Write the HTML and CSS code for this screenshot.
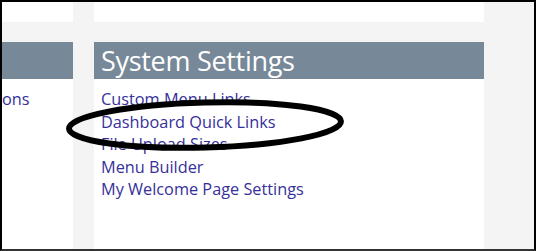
FILE: index.html
```html
<!DOCTYPE html>
<html>
<head>
<meta charset="utf-8">
<link rel="stylesheet" href="styles.css">
</head>
<body>
<div class="frame">
  <div class="col col-left">
    <div class="prev"></div>
    <div class="panel">
      <div class="panel-head"></div>
      <div class="panel-body clipped">
        <a class="link" href="#">ons</a>
      </div>
    </div>
  </div>
  <div class="col col-main">
    <div class="prev"></div>
    <div class="panel">
      <div class="panel-head"><h2 class="title">System Settings</h2></div>
      <div class="panel-body">
        <a class="link" href="#">Custom Menu Links</a>
        <a class="link" href="#">Dashboard Quick Links</a>
        <a class="link" href="#">File Upload Sizes</a>
        <a class="link" href="#">Menu Builder</a>
        <a class="link" href="#">My Welcome Page Settings</a>
      </div>
    </div>
  </div>
  <svg class="circle" width="536" height="251" viewBox="0 0 536 251">
    <ellipse cx="205" cy="125" rx="136" ry="22.5" transform="rotate(-1.5 205 125)" fill="none" stroke="#000" stroke-width="6"/>
  </svg>
</div>
</body>
</html>
```
FILE: styles.css
```css
html, body {
  margin: 0;
  padding: 0;
  background: #ffffff;
}
.frame {
  position: relative;
  box-sizing: border-box;
  width: 536px;
  height: 251px;
  border: 2px solid #000;
  border-bottom-color: #333;
  background: #f4f4f4;
  display: flex;
  gap: 21px;
  overflow: hidden;
  font-family: "Open Sans", "Noto Sans", sans-serif;
}
.col {
  display: flex;
  flex-direction: column;
  gap: 20px;
}
.col-left { width: 71px; }
.col-main { width: 390px; }
.prev {
  height: 20px;
  background: #fff;
}
.panel {
  flex: 1;
  background: #fff;
  display: flex;
  flex-direction: column;
}
.panel-head {
  height: 37px;
  background: #778899;
  padding-left: 7px;
  box-sizing: border-box;
}
.title {
  margin: 0;
  color: #fff;
  font-weight: 400;
  font-size: 27px;
  line-height: 37px;
  letter-spacing: -0.3px;
}
.panel-body {
  display: flex;
  flex-direction: column;
  align-items: flex-start;
  padding: 9px 0 0 7px;
}
.panel-body.clipped {
  padding-left: 0;
}
.link {
  color: #36309a;
  text-decoration: none;
  font-size: 16.3px;
  line-height: 22.5px;
  white-space: nowrap;
}
.circle {
  position: absolute;
  left: -2px;
  top: -2px;
  pointer-events: none;
}
```
